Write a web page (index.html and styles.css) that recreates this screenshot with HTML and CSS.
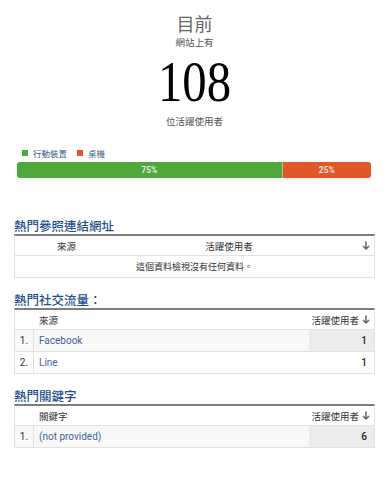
FILE: index.html
```html
<!DOCTYPE html>
<html lang="zh-Hant">
<head>
  <meta charset="UTF-8">
  <title>即時</title>
  <link rel="stylesheet" href="styles.css">
</head>
<body>
  <div class="page">
    <div class="summary">
      <div class="summary-title">目前</div>
      <div class="summary-sub">網站上有</div>
      <div class="summary-number"><span>108</span></div>
      <div class="summary-label">位活躍使用者</div>
    </div>

    <div class="device">
      <div class="legend">
        <span class="legend-item"><span class="swatch swatch-mobile"></span>行動裝置</span>
        <span class="legend-item"><span class="swatch swatch-desktop"></span>桌機</span>
      </div>
      <div class="bar">
        <div class="bar-seg bar-mobile" style="width:75%">75%</div>
        <div class="bar-seg bar-desktop" style="width:25%">25%</div>
      </div>
    </div>

    <div class="section">
      <div class="section-title">熱門參照連結網址</div>
      <div class="table">
        <div class="row head row-ref">
          <div class="cell center">來源</div>
          <div class="cell center">活躍使用者</div>
          <div class="cell right">
            <svg class="arrow" width="8" height="9" viewBox="0 0 8 9"><path d="M4 0.5V8M1 5l3 3 3-3" fill="none" stroke="#666" stroke-width="1.5"/></svg>
          </div>
        </div>
        <div class="row empty">這個資料檢視沒有任何資料。</div>
      </div>
    </div>

    <div class="section">
      <div class="section-title">熱門社交流量：</div>
      <div class="table">
        <div class="row head row-data">
          <div class="cell"></div>
          <div class="cell pad">來源</div>
          <div class="cell right">活躍使用者
            <svg class="arrow" width="8" height="9" viewBox="0 0 8 9"><path d="M4 0.5V8M1 5l3 3 3-3" fill="none" stroke="#666" stroke-width="1.5"/></svg>
          </div>
        </div>
        <div class="row row-data shade">
          <div class="cell num">1.</div>
          <div class="cell pad link">Facebook</div>
          <div class="cell right value">1</div>
        </div>
        <div class="row row-data">
          <div class="cell num">2.</div>
          <div class="cell pad link">Line</div>
          <div class="cell right value plain">1</div>
        </div>
      </div>
    </div>

    <div class="section">
      <div class="section-title">熱門關鍵字</div>
      <div class="table">
        <div class="row head row-data">
          <div class="cell"></div>
          <div class="cell pad">關鍵字</div>
          <div class="cell right">活躍使用者
            <svg class="arrow" width="8" height="9" viewBox="0 0 8 9"><path d="M4 0.5V8M1 5l3 3 3-3" fill="none" stroke="#666" stroke-width="1.5"/></svg>
          </div>
        </div>
        <div class="row row-data shade">
          <div class="cell num">1.</div>
          <div class="cell pad link">(not provided)</div>
          <div class="cell right value">6</div>
        </div>
      </div>
    </div>
  </div>
</body>
</html>
```

FILE: styles.css
```css
body {
  margin: 0;
  background: #fff;
  color: #333;
  font-family: Roboto, "Noto Sans CJK TC", sans-serif;
}
.page {
  padding: 0 16px 0 14px;
}
.summary {
  text-align: center;
  padding-top: 12px;
  color: #555;
}
.summary-title {
  font-family: "Noto Sans CJK TC", sans-serif;
  font-size: 18px;
  line-height: 22px;
  color: #666;
}
.summary-sub {
  font-family: "Noto Sans CJK TC", sans-serif;
  font-size: 9.5px;
  line-height: 12px;
  margin-top: 2px;
}
.summary-number {
  font-family: "Liberation Serif", serif;
  font-size: 58px;
  line-height: 58px;
  margin-top: 5px;
  color: #000;
}
.summary-number span {
  display: inline-block;
  transform: scaleX(0.84);
}
.summary-label {
  font-family: "Noto Sans CJK TC", sans-serif;
  font-size: 9.5px;
  line-height: 12px;
  margin-top: 4px;
}
.device {
  margin-top: 20px;
  padding: 0 4px 0 3px;
}
.legend {
  display: flex;
  gap: 10px;
  padding-left: 5px;
  font-family: "Noto Sans CJK TC", sans-serif;
  font-size: 8.5px;
  line-height: 12px;
  color: #3d5d86;
}
.legend-item {
  display: flex;
  align-items: center;
  gap: 5px;
}
.swatch {
  width: 6px;
  height: 6px;
}
.swatch-mobile { background: #4ea83a; }
.swatch-desktop { background: #e0582a; }
.bar {
  position: relative;
  display: flex;
  height: 16px;
  margin-top: 3px;
  border-radius: 3px;
}
.bar::after {
  content: "";
  position: absolute;
  left: 0;
  right: 0;
  top: 16px;
  height: 8px;
  background: linear-gradient(to bottom, rgba(0,0,0,0.05), rgba(0,0,0,0));
}
.bar-seg {
  display: flex;
  align-items: center;
  justify-content: center;
  font-size: 8.5px;
  font-weight: 700;
  color: rgba(255,255,255,0.85);
}
.bar-mobile {
  background: #4ea83a;
  border-radius: 3px 0 0 3px;
}
.bar-desktop {
  background: #e0582a;
  border-left: 1px solid #9fd08a;
  border-radius: 0 3px 3px 0;
}
.section {
  margin-top: 14px;
}
.device + .section {
  margin-top: 40px;
}
.section-title {
  font-family: "Noto Sans CJK TC", sans-serif;
  font-size: 12.5px;
  line-height: 16px;
  font-weight: 500;
  color: #1f4f8c;
}
.table {
  border-top: 2px solid #7d7d7d;
  border-left: 1px solid #e2e2e2;
  border-right: 1px solid #e2e2e2;
  font-size: 9.5px;
}
.row {
  display: grid;
  border-bottom: 1px solid #e2e2e2;
  font-family: Roboto, "Noto Sans CJK TC", sans-serif;
}
.row.head {
  height: 19px;
  font-family: "Noto Sans CJK TC", sans-serif;
  color: #333;
}
.row-ref {
  grid-template-columns: 103px 222px 1fr;
}
.row-data {
  grid-template-columns: 19px 1fr 65px;
  height: 21px;
}
.row.head.row-data {
  height: 19px;
}
.row.empty {
  display: flex;
  align-items: center;
  justify-content: center;
  height: 21px;
  font-family: "Noto Sans CJK TC", sans-serif;
  font-size: 9px;
  color: #333;
}
.cell {
  display: flex;
  align-items: center;
}
.cell.center {
  justify-content: center;
}
.cell.right {
  justify-content: flex-end;
  gap: 3px;
  padding-right: 4px;
}
.cell.pad {
  padding-left: 5px;
}
.cell.num {
  justify-content: center;
  border-right: 1px solid #e2e2e2;
  font-size: 10px;
  color: #333;
}
.cell.link {
  color: #42659a;
  font-size: 10px;
}
.shade {
  background: #f8f8f8;
}
.cell.value {
  background: #ececec;
  font-weight: 500;
  font-size: 10px;
  color: #222;
  padding-right: 7px;
}
.cell.value.plain {
  background: transparent;
}
.arrow {
  display: block;
}
```
